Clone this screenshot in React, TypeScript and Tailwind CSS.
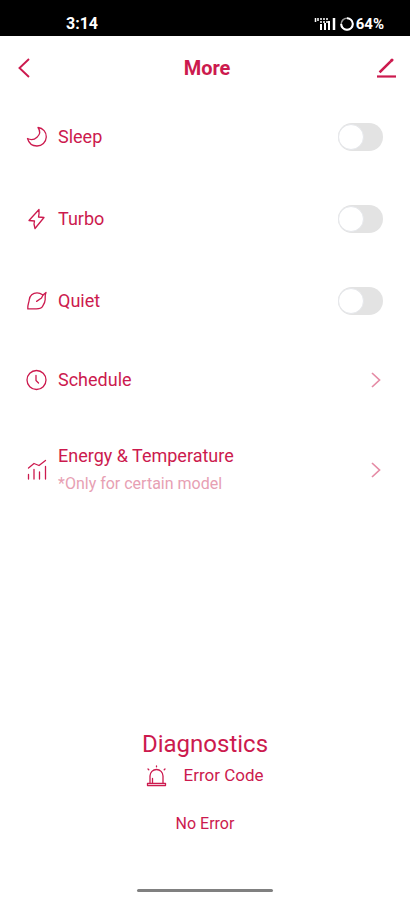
import { useState, type ReactNode } from "react";

const iconProps = {
  width: 22,
  height: 22,
  viewBox: "0 0 22 22",
  fill: "none",
  stroke: "currentColor",
  strokeWidth: 1.3,
  strokeLinecap: "round",
  strokeLinejoin: "round",
  "aria-hidden": true,
} as const;

function MoonIcon() {
  return (
    <svg {...iconProps}>
      <path d="M12 1.500C17 2 20.500 6 20.300 11C20 16.500 16 20 11 20C6.500 20 2.800 17 1.500 12.500C4.500 14 8.500 13.500 11 11.200C14 8.500 14.500 5 12 1.500Z" />
    </svg>
  );
}

function BoltIcon() {
  return (
    <svg {...iconProps}>
      <path d="M13 1.500L3 12.500L8.500 13L8 16L9 20.500L18 9.500L12.500 9L13 6Z" />
    </svg>
  );
}

function LeafIcon() {
  return (
    <svg {...iconProps}>
      <path d="M1.800 18.800C1.300 15.500 3 12.500 3.200 10C3.500 5.500 7 2.800 11 2.800C13.500 2.800 15 3.600 17 5L20 2.500C18.800 5 19.200 7 19.200 9.600C19.200 12.500 17.800 14.500 16.500 16.500C15.500 18.300 13.500 18.800 10.400 18.800Z" />
      <path d="M17 5L15.500 8L10.600 11.400" />
    </svg>
  );
}

function ClockIcon() {
  return (
    <svg {...iconProps}>
      <circle cx="10.500" cy="11" r="9.500" />
      <path d="M10 6.500V11.500L12.500 14" />
    </svg>
  );
}

function ChartIcon() {
  return (
    <svg {...iconProps}>
      <path d="M2.500 9L8 4.500L13 6.500L19.500 1.500" />
      <path d="M2.500 20V15.500M8 20V10.500M13.500 20V13M19.500 20V7.500" />
    </svg>
  );
}

function SirenIcon() {
  return (
    <svg {...iconProps}>
      <path d="M4 18V11A6.500 6.500 0 0 1 17 11V18M1.500 18.300H19.500V20.500H1.500ZM6.500 18V13.500" />
      <path d="M10.500 1V1.800M2 4L2.800 4.800M19 4L18.200 4.800" />
    </svg>
  );
}

function PencilIcon() {
  return (
    <svg width="20" height="20" viewBox="0 0 20 20" fill="none" stroke="currentColor" aria-hidden>
      <path d="M4.500 13.500L13.500 4.500" strokeWidth="2.600" strokeLinecap="square" />
      <path d="M15.300 2.700L16 2" strokeWidth="3" strokeLinecap="round" />
      <path d="M1 18.500H20" strokeWidth="2.200" />
    </svg>
  );
}

function StatusIcons() {
  return (
    <svg width="42" height="16" viewBox="0 0 42 16" fill="none" stroke="white" aria-hidden>
      <path d="M1.500 2V6M4 2V5" strokeWidth="1.500" />
      <path d="M6 3L15 3M6 6H15" strokeWidth="1.500" strokeDasharray="2 1" />
      <path d="M7 8V14M11 7V14M15 5V14" strokeWidth="2" />
      <path d="M20 2V14" strokeWidth="2.500" />
      <circle cx="33" cy="8" r="5.800" strokeWidth="1.500" opacity="0.600" />
      <path d="M33 2.200A5.800 5.800 0 1 1 27.200 8" strokeWidth="2" />
    </svg>
  );
}

function ChevronIcon() {
  return (
    <svg width="10" height="16" viewBox="0 0 10 16" fill="none" stroke="currentColor" strokeWidth="1.700" className="text-[#e58ba5]" aria-hidden>
      <path d="M1 1L8.500 8L1 15" />
    </svg>
  );
}

// Row with an on/off switch on the right
function ToggleRow({ icon, label }: { icon: ReactNode; label: string }) {
  const [on, setOn] = useState(false);

  return (
    <label className="flex h-8 cursor-pointer items-center">
      {icon}
      <span className="ml-2.5 flex-1 text-lg">{label}</span>
      <input
        type="checkbox"
        checked={on}
        onChange={(e) => setOn(e.target.checked)}
        className="peer sr-only"
      />
      <span className="mr-1 flex h-7 w-[45px] items-center rounded-full bg-[#e3e3e3] peer-checked:justify-end peer-checked:bg-[#cf1748]">
        <span className="h-[26px] w-[26px] rounded-full border border-gray-200 bg-white" />
      </span>
    </label>
  );
}

// Row that opens another screen
function LinkRow({ icon, label, note }: { icon: ReactNode; label: string; note?: string }) {
  return (
    <a href="#" className="flex min-h-8 items-center">
      {icon}
      <span className="ml-2.5 flex-1">
        <span className="block text-lg leading-7">{label}</span>
        {note && <span className="block text-base leading-7 text-[#e7a0b3]">{note}</span>}
      </span>
      <span className="mr-1.5">
        <ChevronIcon />
      </span>
    </a>
  );
}

export default function App() {
  return (
    <div className="flex min-h-screen flex-col bg-white font-['Roboto',sans-serif] text-[#cc1a4e]">
      {/* Status bar */}
      <div className="flex h-9 items-center justify-between bg-black pt-3 pr-[26px] pl-[66px] text-white">
        <span className="text-base font-bold">3:14</span>
        <span className="flex items-center">
          <StatusIcons />
          <span className="text-[15px] font-bold">64%</span>
        </span>
      </div>

      {/* Header */}
      <header className="grid h-16 grid-cols-3 items-center pr-3.5 pl-[18px]">
        <button type="button" aria-label="Back" className="justify-self-start">
          <svg width="12" height="20" viewBox="0 0 12 20" fill="none" stroke="currentColor" strokeWidth="1.900" aria-hidden>
            <path d="M11 1L1.500 10L11 19" />
          </svg>
        </button>
        <h1 className="text-center text-xl font-bold">More</h1>
        <button type="button" aria-label="Edit" className="justify-self-end">
          <PencilIcon />
        </button>
      </header>

      <main className="flex flex-1 flex-col">
        <div className="flex flex-col gap-[50px] pt-[21px] pr-[23px] pl-[26px]">
          <ToggleRow icon={<MoonIcon />} label="Sleep" />
          <ToggleRow icon={<BoltIcon />} label="Turbo" />
          <ToggleRow icon={<LeafIcon />} label="Quiet" />
        </div>
        <div className="flex flex-col gap-[46px] pt-[47px] pr-[23px] pl-[26px]">
          <LinkRow icon={<ClockIcon />} label="Schedule" />
          <LinkRow icon={<ChartIcon />} label="Energy & Temperature" note="*Only for certain model" />
        </div>

        {/* Diagnostics */}
        <section className="mt-auto flex flex-col items-center pb-[53px]">
          <h2 className="text-2xl leading-8">Diagnostics</h2>
          <div className="flex h-8 items-center gap-[15px]">
            <SirenIcon />
            <span className="text-[17px]">Error Code</span>
          </div>
          <p className="mt-5 text-base">No Error</p>
        </section>
      </main>

      <div className="mx-auto mb-2 h-[3px] w-1/3 rounded-full bg-[#808080]" />
    </div>
  );
}
